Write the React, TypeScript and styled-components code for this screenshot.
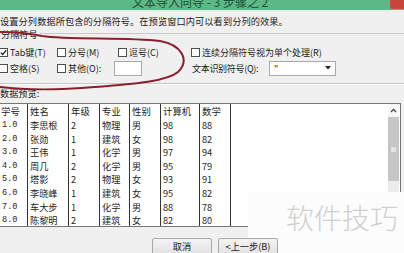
import React from 'react';
import styled, { createGlobalStyle } from 'styled-components';

const GlobalStyle = createGlobalStyle`
  html, body {
    margin: 0;
    padding: 0;
    background: #f0f0f0;
  }
  body {
    font-family: "Noto Sans CJK SC", "Noto Sans", sans-serif;
  }
`;

const columns = [
  { title: '学号', width: 29, mono: true, values: ['1.0', '2.0', '3.0', '4.0', '5.0', '6.0', '7.0', '8.0'] },
  { title: '姓名', width: 41, values: ['李思根', '张勋', '王伟', '周几', '塔影', '李晓峰', '车大步', '陈黎明'] },
  { title: '年级', width: 31, values: ['2', '1', '1', '2', '2', '1', '1', '2'] },
  { title: '专业', width: 30, values: ['物理', '建筑', '化学', '化学', '物理', '建筑', '化学', '建筑'] },
  { title: '性别', width: 31, values: ['男', '女', '男', '男', '女', '女', '男', '女'] },
  { title: '计算机', width: 39, values: ['98', '98', '97', '95', '93', '95', '88', '82'] },
  { title: '数学', width: 31, values: ['88', '82', '94', '79', '91', '82', '78', '80'] },
];

const Dialog = styled.div`
  position: relative;
  width: 404px;
  height: 253px;
  overflow: hidden;
  background: #f0f0f0;
  color: #1b1b1b;
  font-size: 9px;
`;

const TitleBar = styled.div`
  display: flex;
  align-items: flex-start;
  height: 10px;
  overflow: hidden;
  background: #5cb887;
  border-bottom: 2px solid #e3f2ea;
`;

const TitleText = styled.div`
  margin: -5px 0 0 132px;
  font-size: 12px;
  line-height: 14px;
  color: #1d5236;
  white-space: nowrap;
`;

const CloseButton = styled.div`
  margin-left: auto;
  width: 14px;
  height: 9px;
  background: #c8473d;
  border-bottom-left-radius: 3px;
`;

const Intro = styled.div`
  padding-top: 2px;
  line-height: 14px;
  font-size: 9.2px;
  letter-spacing: 0.1px;
  white-space: nowrap;
`;

const Group = styled.div`
  margin: 5px 0 0 -6px;
  width: 440px;
  height: 49px;
  border: 1px solid #c6cacf;
  box-shadow: 0 1px 0 #fbfbfb;
`;

const Legend = styled.div`
  width: fit-content;
  margin: -6px 0 0 5px;
  padding: 0 2px 0 1px;
  background: #f0f0f0;
  line-height: 12px;
  font-size: 9.2px;
`;

const Options = styled.div`
  display: grid;
  grid-template-columns: 58px 61px 73px 1fr;
  grid-auto-rows: 16px;
  margin: 4px 0 0 4px;
`;

const Option = styled.div<{ $span?: number }>`
  display: flex;
  align-items: center;
  gap: 2px;
  white-space: nowrap;
  grid-column: span ${(p) => p.$span ?? 1};
`;

const Box = styled.span`
  display: flex;
  align-items: center;
  justify-content: center;
  width: 9px;
  height: 9px;
  box-sizing: border-box;
  border: 1px solid #4d4d4d;
  background: #fff;
`;

const TextInput = styled.span`
  width: 28px;
  height: 15px;
  margin-left: 11px;
  box-sizing: border-box;
  border: 1px solid #a8a8a8;
  background: #fff;
`;

const Qualifier = styled.div`
  display: flex;
  align-items: center;
  white-space: nowrap;
`;

const QualifierLabel = styled.span`
  width: 77px;
  padding-left: 1px;
  letter-spacing: -0.3px;
`;

const Select = styled.div`
  display: flex;
  align-items: center;
  justify-content: space-between;
  width: 67px;
  height: 15px;
  box-sizing: border-box;
  padding: 0 4px 0 4px;
  border: 1px solid #a9a9a9;
  background: #fff;
`;

const PreviewLabel = styled.div`
  margin-top: 3px;
  line-height: 12px;
  font-size: 9.2px;
`;

const PreviewBox = styled.div`
  display: flex;
  margin: 4px 0 0 -2px;
  width: 403px;
  height: 124px;
  box-sizing: border-box;
  border: 1px solid #767676;
  background: #fff;
`;

const Column = styled.div<{ $width: number }>`
  display: flex;
  flex-direction: column;
  width: ${(p) => p.$width}px;
  flex: none;
  box-sizing: border-box;
  border-right: 1px solid #353535;
`;

const HeaderCell = styled.div`
  height: 16px;
  line-height: 15px;
  padding-left: 2px;
  white-space: nowrap;
  font-size: 9.4px;
`;

const Cell = styled.div<{ $mono?: boolean }>`
  height: 13.6px;
  line-height: 13.6px;
  padding-left: ${(p) => (p.$mono ? 3 : 2)}px;
  white-space: nowrap;
  font-family: ${(p) => (p.$mono ? '"Liberation Mono", monospace' : 'inherit')};
  font-size: ${(p) => (p.$mono ? 8.6 : 9.2)}px;
  color: #262626;
`;

const Scrollbar = styled.div`
  display: flex;
  flex-direction: column;
  width: 11px;
  margin: 0 1px 0 auto;
  background: #ececec;
`;

const ScrollArrow = styled.div`
  display: flex;
  align-items: center;
  justify-content: center;
  height: 13px;
  background: #f6f6f6;
`;

const ScrollThumb = styled.div`
  display: flex;
  align-items: center;
  justify-content: center;
  height: 64px;
  background: #c6c6c6;
`;

const Grip = styled.span`
  width: 5px;
  height: 5px;
  background: #e4e4e4;
`;

const Watermark = styled.div`
  position: absolute;
  left: 248px;
  top: 192px;
  right: 0;
  bottom: 0;
  z-index: 1;
  padding: 11px 0 0 38px;
  background: #fcfcfc;
  font-size: 28px;
  font-weight: 300;
  line-height: 28px;
  color: #d0d0d0;
  white-space: nowrap;
`;

const ButtonRow = styled.div`
  position: relative;
  z-index: 2;
  display: flex;
  gap: 6px;
  margin-top: 11px;
  padding-left: 152px;
`;

const Button = styled.div`
  display: flex;
  align-items: center;
  justify-content: center;
  width: 60px;
  height: 17px;
  box-sizing: border-box;
  border: 1px solid #a9a9a9;
  border-radius: 2px;
  background: linear-gradient(#f4f4f4, #e2e2e2);
  font-size: 9.2px;
  padding-bottom: 2px;
`;

const Scribble = styled.svg`
  position: absolute;
  left: 0;
  top: 0;
  z-index: 3;
  pointer-events: none;
`;

function Checkbox({ checked }: { checked?: boolean }) {
  return (
    <Box>
      {checked && (
        <svg width="7" height="7" viewBox="0 0 7 7">
          <path d="M0.8 3.6 L2.7 5.5 L6.2 1.2" fill="none" stroke="#1e1e1e" strokeWidth="1.3" />
        </svg>
      )}
    </Box>
  );
}

export default function App() {
  return (
    <>
      <GlobalStyle />
      <Dialog>
        <TitleBar>
          <TitleText>文本导入向导 - 3 步骤之 2</TitleText>
          <CloseButton />
        </TitleBar>
        <Intro>设置分列数据所包含的分隔符号。在预览窗口内可以看到分列的效果。</Intro>

        <Group>
          <Legend>分隔符号</Legend>
          <Options>
            <Option>
              <Checkbox checked />
              Tab键(T)
            </Option>
            <Option>
              <Checkbox />
              分号(M)
            </Option>
            <Option>
              <Checkbox />
              逗号(C)
            </Option>
            <Option>
              <Checkbox />
              连续分隔符号视为单个处理(R)
            </Option>
            <Option>
              <Checkbox />
              空格(S)
            </Option>
            <Option $span={2}>
              <Checkbox />
              其他(O):
              <TextInput />
            </Option>
            <Qualifier>
              <QualifierLabel>文本识别符号(Q):</QualifierLabel>
              <Select>
                <span>"</span>
                <svg width="6" height="4" viewBox="0 0 6 4">
                  <path d="M0 0 H6 L3 3.5 Z" fill="#222" />
                </svg>
              </Select>
            </Qualifier>
          </Options>
        </Group>

        <PreviewLabel>数据预览:</PreviewLabel>
        <PreviewBox>
          {columns.map((col) => (
            <Column key={col.title} $width={col.width}>
              <HeaderCell>{col.title}</HeaderCell>
              {col.values.map((v, i) => (
                <Cell key={i} $mono={col.mono}>
                  {v}
                </Cell>
              ))}
            </Column>
          ))}
          <Scrollbar>
            <ScrollArrow>
              <svg width="7" height="5" viewBox="0 0 7 5">
                <path d="M1 4 L3.5 1.3 L6 4" fill="none" stroke="#3a3a3a" strokeWidth="1.2" />
              </svg>
            </ScrollArrow>
            <ScrollThumb>
              <Grip />
            </ScrollThumb>
          </Scrollbar>
        </PreviewBox>

        <ButtonRow>
          <Button>取消</Button>
          <Button>&lt;上一步(B)</Button>
        </ButtonRow>

        <Watermark>软件技巧</Watermark>

        <Scribble width="404" height="253" viewBox="0 0 404 253">
          <path
            d="M0 32 C14 32 28 33 42 36 C70 40 125 37 160 41 C182 45 190 60 178 72 C166 82 130 84 95 87 C60 90 25 90 0 87"
            fill="none"
            stroke="#8c1f2e"
            strokeWidth="2"
            strokeLinecap="round"
          />
        </Scribble>
      </Dialog>
    </>
  );
}
